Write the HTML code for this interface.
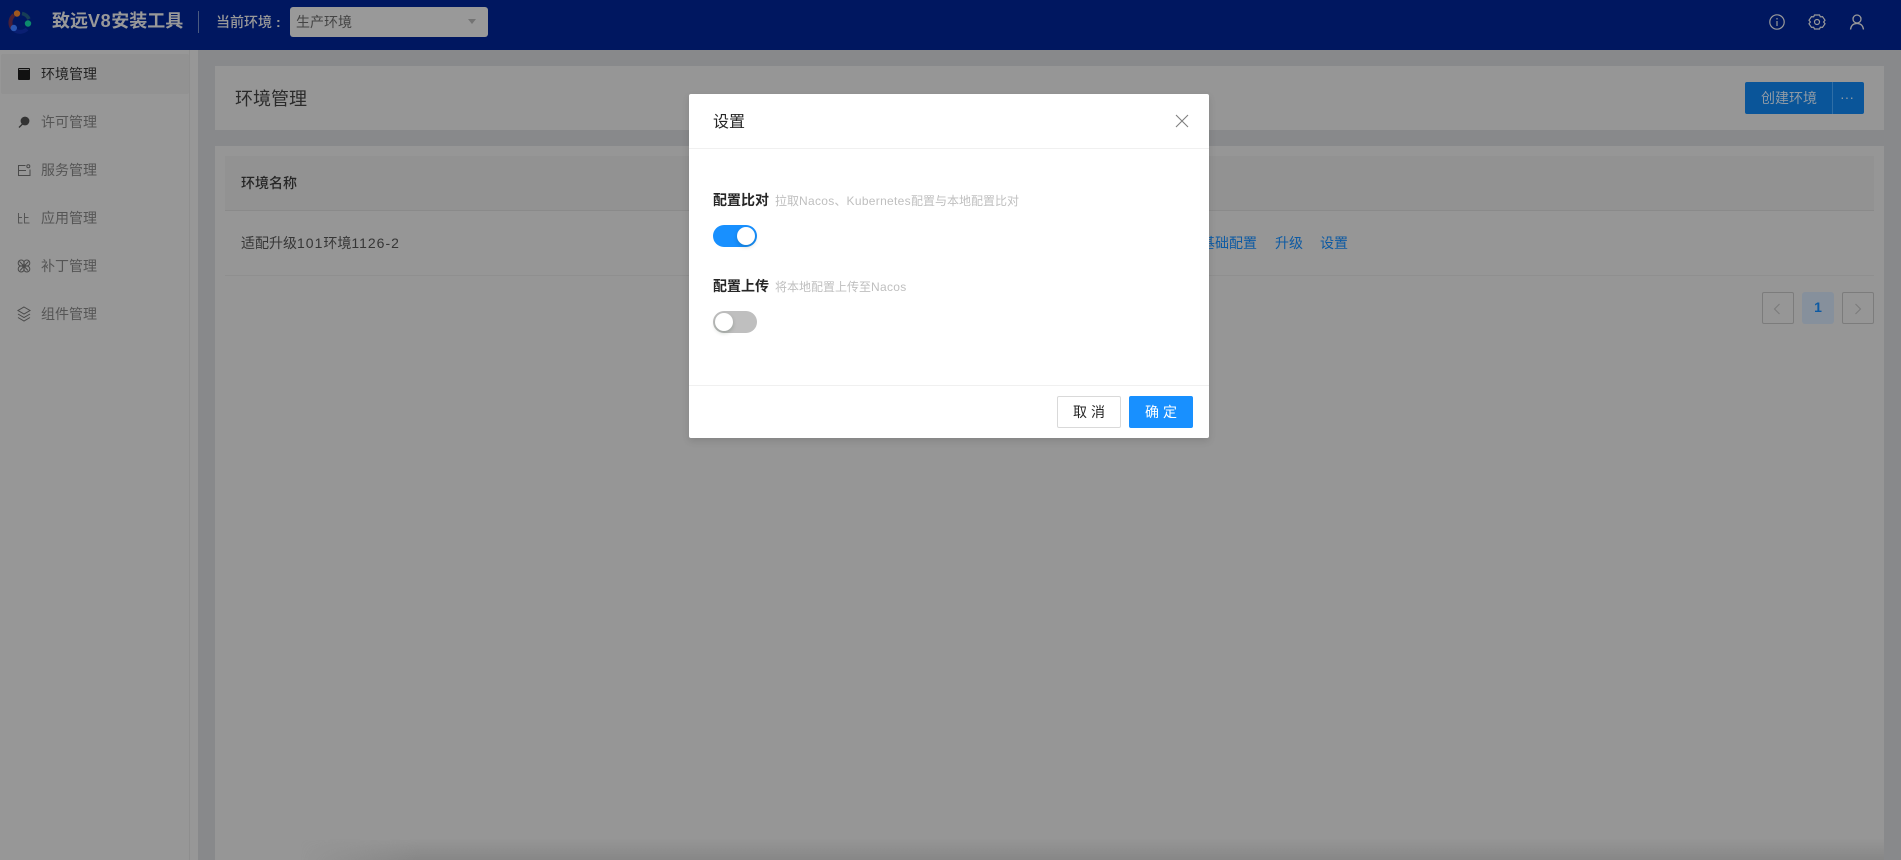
<!DOCTYPE html>
<html lang="zh-CN">
<head>
<meta charset="utf-8">
<title>致远V8安装工具</title>
<style>
*{box-sizing:border-box;margin:0;padding:0}
html,body{width:1901px;height:860px;overflow:hidden;background:#88898b;font-family:"Liberation Sans","Noto Sans CJK SC",sans-serif;font-size:14px}
.a{position:absolute;white-space:nowrap}
.t{line-height:20px;height:20px}
#header{left:0;top:0;width:1901px;height:50px;background:#001760}
#side{left:0;top:50px;width:190px;height:810px;background:#979797;border-right:1px solid #8e8e8e}
#strip{left:190px;top:50px;width:8px;height:810px;background:#979797}
.mi{left:41px;color:#555;font-size:14px}
.ic{left:16px;width:20px;height:20px}
.card{background:#969696}
.ft{left:300px;top:830px;width:1584px;height:30px;background:linear-gradient(180deg,rgba(128,128,128,0) 30%,rgba(128,128,128,.7) 100%);-webkit-mask-image:linear-gradient(90deg,transparent,#000 120px)}
.link{color:#0d5aa3;font-size:14px}
.pg{top:292px;width:32px;height:32px;border:1px solid #7c7c7c;border-radius:2px}
#modal{left:689px;top:94px;width:520px;height:344px;background:#fff;border-radius:2px;box-shadow:0 3px 8px rgba(0,0,0,.12)}
.lb{left:713px;font-weight:700;color:#262626;font-size:14px}
.hint{left:775px;color:#bfbfbf;font-size:12px}
.hint span{letter-spacing:.3px}
.sw{left:713px;width:44px;height:22px;border-radius:11px}
.kb{width:18px;height:18px;border-radius:50%;background:#fff;top:2px;box-shadow:0 2px 4px rgba(0,35,11,.2)}
.btn{top:396px;width:64px;height:32px;line-height:30px;text-align:center;border-radius:2px;font-size:14px;letter-spacing:4px;padding-left:4px}
.d{letter-spacing:1px}
</style>
</head>
<body>
<div class="a" id="header"></div>
<svg class="a" style="left:7px;top:9px" width="26" height="26" viewBox="0 0 26 26" fill="none">
<path d="M5 19A10 10 0 0 1 7 6" stroke="#4a2036" stroke-width="4"/>
<path d="M15 4.500A10 10 0 0 1 22 10" stroke="#173e56" stroke-width="3.500"/>
<path d="M8 21.500A10 10 0 0 0 20 20" stroke="#0a1f72" stroke-width="4"/>
<circle cx="10" cy="4.500" r="3.200" fill="#a0581e"/>
<circle cx="21" cy="14.500" r="3.200" fill="#0c8a6c"/>
<circle cx="6.800" cy="19" r="3.200" fill="#2a56b0"/>
</svg>
<div class="a" style="left:52px;top:9px;font-size:18px;font-weight:700;color:#999;line-height:24px">致远<span style="letter-spacing:.6px">V8</span>安装工具</div>
<div class="a" style="left:198px;top:11px;width:1px;height:22px;background:#4a5a80"></div>
<div class="a t" style="left:216px;top:12px;color:#999;font-weight:500">当前环境</div>
<div class="a t" style="left:276px;top:12px;color:#999;font-weight:700">:</div>
<div class="a" style="left:290px;top:7px;width:198px;height:30px;background:#999;border-radius:3px"></div>
<div class="a t" style="left:296px;top:12px;color:#444">生产环境</div>
<div class="a" style="left:468px;top:19px;width:0;height:0;border-left:4.500px solid transparent;border-right:4.500px solid transparent;border-top:5px solid #737373"></div>

<svg class="a" style="left:1769px;top:14px" width="16" height="16" viewBox="0 0 16 16" fill="none" stroke="#9a9a9a" stroke-width="1.200"><circle cx="8" cy="8" r="7.200"/><path d="M8 7v5M8 4v1.500"/></svg>
<svg class="a" style="left:1808px;top:14px" width="18" height="16" viewBox="0 0 18 16" fill="none" stroke="#9a9a9a" stroke-width="1.200"><path d="M6.500 1h5l.8 1.800 2.200-.2 2.500 3.600L15.600 8l1.400 1.800-2.500 3.600-2.200-.2-.8 1.800h-5l-.8-1.800-2.200.2L1 9.800 2.400 8 1 6.200l2.500-3.600 2.200.2z"/><circle cx="9" cy="8" r="2.500"/></svg>
<svg class="a" style="left:1849px;top:14px" width="16" height="16" viewBox="0 0 16 16" fill="none" stroke="#9a9a9a" stroke-width="1.300"><circle cx="8" cy="5" r="4"/><path d="M1.500 15.500C2 11.500 4.500 9.500 8 9.500s6 2 6.500 6"/></svg>

<div class="a" id="side"></div>
<div class="a" id="strip"></div>
<div class="a" style="left:1px;top:54px;width:188px;height:40px;background:#929292;border-radius:2px"></div>

<svg class="a ic" style="top:64px" viewBox="0 0 20 20"><rect x="2" y="4" width="12" height="12" rx="1" fill="#111"/><rect x="3" y="5" width="10" height="1" fill="#777"/></svg>
<div class="a t mi" style="top:64px;color:#222">环境管理</div>
<svg class="a ic" style="top:112px" viewBox="0 0 20 20"><circle cx="9" cy="9" r="4.400" fill="#333"/><path d="M6.500 12l-3.500 3.500" stroke="#333" stroke-width="1.300"/></svg>
<div class="a t mi" style="top:112px">许可管理</div>
<svg class="a ic" style="top:160px" viewBox="0 0 20 20" fill="none" stroke="#4a4a4a" stroke-width="1"><path d="M9.500 5.500h-7v10H14V9.500M2.500 10.500H10"/><circle cx="12.300" cy="6.300" r="1.500"/></svg>
<div class="a t mi" style="top:160px">服务管理</div>
<svg class="a ic" style="top:208px" viewBox="0 0 20 20" fill="none" stroke="#555" stroke-width="1"><path d="M2.500 5v10h4M2.500 9.500h3.500M8.500 5v10h5M8.500 9.500h4"/></svg>
<div class="a t mi" style="top:208px">应用管理</div>
<svg class="a ic" style="top:256px" viewBox="0 0 20 20" fill="none" stroke="#4a4a4a" stroke-width="1"><circle cx="5.200" cy="7" r="3"/><circle cx="10.800" cy="7" r="3"/><circle cx="5.200" cy="13" r="3"/><circle cx="10.800" cy="13" r="3"/><path d="M4 14.500L12.500 5.500M3.500 5.500L12 14.500"/></svg>
<div class="a t mi" style="top:256px">补丁管理</div>
<svg class="a ic" style="top:304px" viewBox="0 0 20 20" fill="none" stroke="#4a4a4a" stroke-width="1"><path d="M8 3l6 3.500-6 3.500-6-3.500zM2 10l6 3.500 6-3.500M2 13.500l6 3.500 6-3.500"/></svg>
<div class="a t mi" style="top:304px">组件管理</div>

<div class="a card" style="left:215px;top:66px;width:1669px;height:64px"></div>
<div class="a" style="left:235px;top:86px;font-size:18px;line-height:26px;color:#2a2a2a">环境管理</div>
<div class="a" style="left:1745px;top:82px;width:119px;height:32px;background:#0a5599;border-radius:2px"></div>
<div class="a" style="left:1832px;top:82px;width:1px;height:32px;background:#2f6ea6"></div>
<div class="a t" style="left:1761px;top:88px;color:#8f9aa5">创建环境</div>
<div class="a" style="left:1840px;top:90px;color:#8f9aa5;font-size:14px;line-height:14px;letter-spacing:0">···</div>

<div class="a card" style="left:215px;top:146px;width:1669px;height:714px"></div>
<div class="a" style="left:225px;top:156px;width:1649px;height:55px;background:#929292;border-bottom:1px solid #8a8a8a"></div>
<div class="a t" style="left:241px;top:173px;color:#262626;font-weight:500">环境名称</div>
<div class="a t" style="left:241px;top:233px;color:#363636">适配升级<span class="d">101</span>环境<span class="d">1126-2</span></div>
<div class="a" style="left:225px;top:275px;width:1649px;height:1px;background:#8f8f8f"></div>
<div class="a t link" style="left:1201px;top:233px">基础配置</div>
<div class="a t link" style="left:1275px;top:233px">升级</div>
<div class="a t link" style="left:1320px;top:233px">设置</div>

<div class="a pg" style="left:1762px"></div>
<svg class="a" style="left:1772px;top:303px" width="10" height="12" viewBox="0 0 10 12" fill="none" stroke="#7a7a7a" stroke-width="1"><path d="M7.500 1L2.500 6l5 5"/></svg>
<div class="a" style="left:1802px;top:292px;width:32px;height:32px;background:#86909c;border-radius:3px;color:#0d5aa3;text-align:center;line-height:30px;font-weight:700;font-size:14px">1</div>
<div class="a pg" style="left:1842px"></div>
<svg class="a" style="left:1853px;top:303px" width="10" height="12" viewBox="0 0 10 12" fill="none" stroke="#7a7a7a" stroke-width="1"><path d="M2.500 1l5 5-5 5"/></svg>
<div class="a ft"></div>

<div class="a" id="modal"></div>
<div class="a" style="left:713px;top:111px;font-size:16px;line-height:24px;color:#262626">设置</div>
<svg class="a" style="left:1175px;top:114px" width="14" height="14" viewBox="0 0 14 14" fill="none" stroke="#7f7f7f" stroke-width="1.100"><path d="M1 1l12 12M13 1L1 13"/></svg>
<div class="a" style="left:689px;top:148px;width:520px;height:1px;background:#f0f0f0"></div>

<div class="a t lb" style="top:190px">配置比对</div>
<div class="a t hint" style="top:191px">拉取<span>Nacos</span>、<span>Kubernetes</span>配置与本地配置比对</div>
<div class="a sw" style="top:225px;background:#1890ff"><div class="a kb" style="left:24px"></div></div>

<div class="a t lb" style="top:276px">配置上传</div>
<div class="a t hint" style="top:277px">将本地配置上传至<span>Nacos</span></div>
<div class="a sw" style="top:311px;background:#bfbfbf"><div class="a kb" style="left:2px"></div></div>

<div class="a" style="left:689px;top:385px;width:520px;height:1px;background:#f0f0f0"></div>
<div class="a btn" style="left:1057px;background:#fff;border:1px solid #d9d9d9;color:#262626">取消</div>
<div class="a btn" style="left:1129px;background:#1890ff;border:1px solid #1890ff;color:#fff">确定</div>
</body>
</html>
